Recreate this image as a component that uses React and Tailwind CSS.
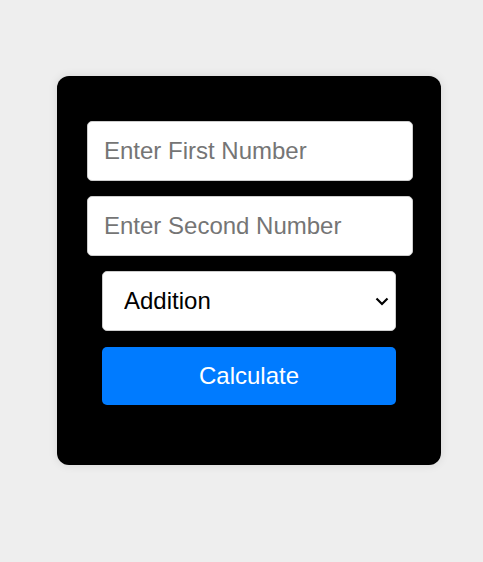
export default function App() {
  return (
    <div className="min-h-[562px] bg-[#eeeeee] pt-[76px] pl-[57px] font-['Liberation_Sans',Arial,sans-serif]">
      <div className="flex h-[389px] w-[384px] flex-col items-center rounded-xl bg-black pt-[45px] shadow-[0_0_10px_rgba(0,0,0,0.1)]">
        <input
          type="text"
          placeholder="Enter First Number"
          className="ml-[2px] h-[60px] w-[326px] rounded-[5px] border border-[#cccccc] bg-white px-4 text-[24px] text-black outline-none placeholder:text-[#757575]"
        />
        <input
          type="text"
          placeholder="Enter Second Number"
          className="ml-[2px] mt-[15px] h-[60px] w-[326px] rounded-[5px] border border-[#cccccc] bg-white px-4 text-[24px] text-black outline-none placeholder:text-[#757575]"
        />
        <div className="relative mt-[15px] h-[60px] w-[294px]">
          <select
            defaultValue="add"
            className="h-full w-full appearance-none rounded-[5px] border border-[#cccccc] bg-white pl-[21px] pr-8 text-[24px] text-black outline-none"
          >
            <option value="add">Addition</option>
            <option value="sub">Subtraction</option>
            <option value="mul">Multiplication</option>
            <option value="div">Division</option>
          </select>
          <svg
            className="pointer-events-none absolute right-[7px] top-[26px]"
            width="14"
            height="9"
            viewBox="0 0 14 9"
            fill="none"
          >
            <path d="M1.5 1.5 L7 7 L12.5 1.5" stroke="black" strokeWidth="2.2" />
          </svg>
        </div>
        <button
          type="button"
          className="mt-4 h-[58px] w-[294px] rounded-[5px] bg-[#007bff] text-[24px] text-white"
        >
          Calculate
        </button>
      </div>
    </div>
  );
}
